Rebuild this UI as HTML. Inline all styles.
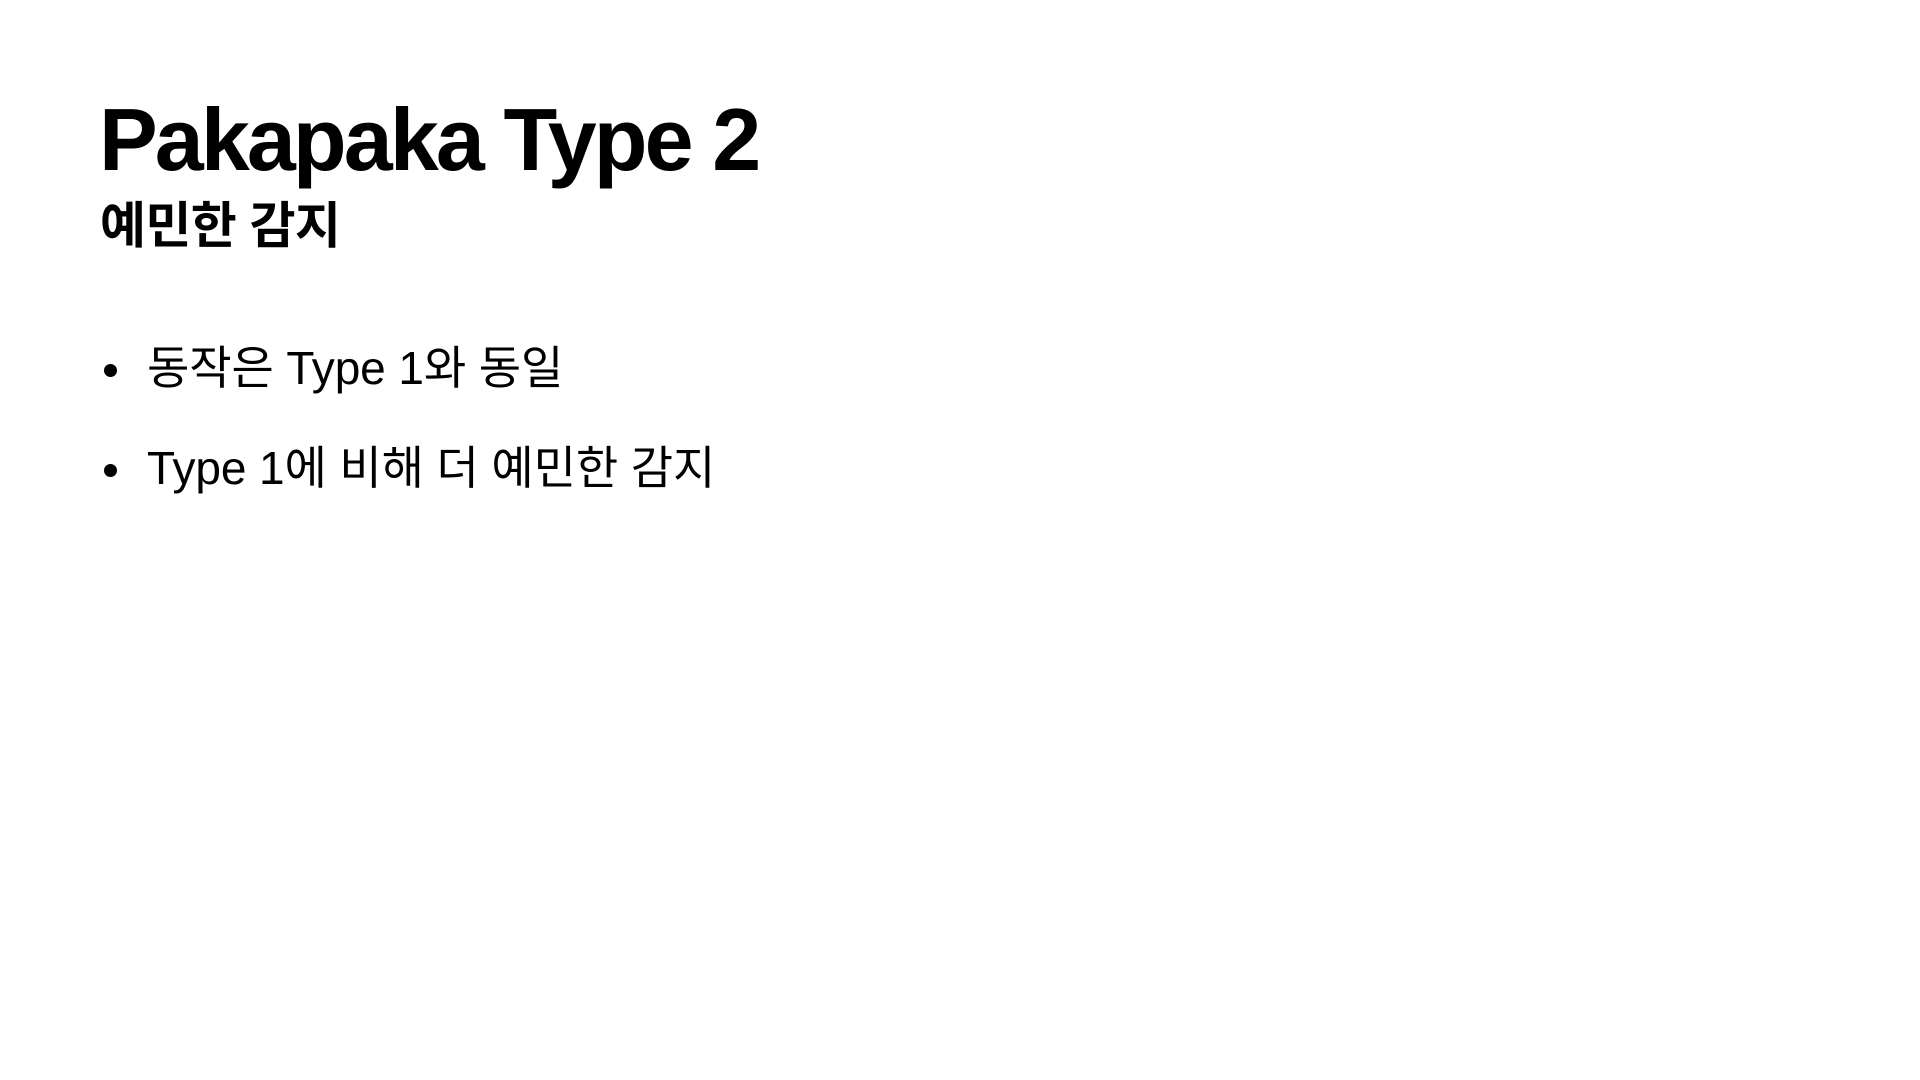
<!DOCTYPE html>
<html><head><meta charset="utf-8"><style>
html,body{margin:0;padding:0;background:#fff;width:1920px;height:1080px;overflow:hidden}
body{font-family:"Liberation Sans","Noto Sans CJK KR",sans-serif;color:#000;position:relative}
.t{position:absolute;left:99px;top:96px;font-size:88px;font-weight:bold;letter-spacing:-2.9px;line-height:1;margin:0}
.s{position:absolute;left:100px;top:196px;font-size:50px;font-weight:bold;line-height:1.2;letter-spacing:-0.6px}
.b{position:absolute;left:147px;font-size:46px;line-height:1.2;letter-spacing:-0.1px}
.b:before{content:"";position:absolute;left:-43px;top:23px;width:13px;height:13px;border-radius:50%;background:#000}
</style></head><body>
<div class="t">Pakapaka Type 2</div>
<div class="s">예민한 감지</div>
<div class="b" style="top:341px">동작은 Type 1와 동일</div>
<div class="b" style="top:441px">Type 1에 비해 더 예민한 감지</div>
</body></html>
